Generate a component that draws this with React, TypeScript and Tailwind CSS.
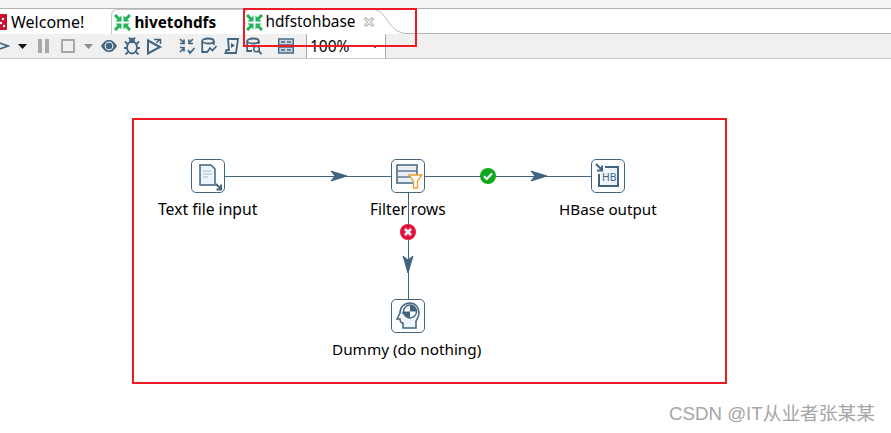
import type { ReactNode } from "react";

const blue = "#42647f";
const font = { fontFamily: '"Noto Sans", "Noto Sans CJK SC", sans-serif' };

function Merge({ color = "#1fb55a" }: { color?: string }) {
  return (
    <svg width="17" height="17" viewBox="0 0 17 17" className="shrink-0" fill={color} stroke="none">
      <path d="M1 1 5 5M16 1 12 5M1 16 5 12M16 16 12 12" stroke={color} strokeWidth="3" />
      <path d="M7.5 1.5V7.5H1.5Z" />
      <path d="M9.5 1.5V7.5H15.5Z" />
      <path d="M7.5 15.5V9.5H1.5Z" />
      <path d="M9.5 15.5V9.5H15.5Z" />
    </svg>
  );
}

function Tool({ children, w = 16, ml }: { children: ReactNode; w?: number; ml: string }) {
  return (
    <svg width={w} height="18" viewBox={`0 0 ${w} 18`} className={`shrink-0 ${ml}`} fill="none" stroke={blue} strokeWidth="1.8">
      {children}
    </svg>
  );
}

function Node({ left, top, label, labelLeft, size, children }: { left: number; top: number; label: string; labelLeft: number; size: string; children: ReactNode }) {
  return (
    <>
      <div className="absolute h-[34px] w-[34px] rounded-[5px] border border-[#42647f] bg-white" style={{ left, top }}>
        <svg width="32" height="32" viewBox="0 0 32 32" fill="none" stroke={blue} className="overflow-visible">
          {children}
        </svg>
      </div>
      <div className={`absolute leading-5 whitespace-nowrap text-black ${size}`} style={{ left: labelLeft, top: top + 40 }}>
        {label}
      </div>
    </>
  );
}

export default function App() {
  return (
    <div className="relative h-[433px] w-[891px] overflow-hidden bg-white" style={font}>
      <div className="h-[8px] bg-[#f4f4f4]" />
      <div className="relative flex h-[26px] items-center border-t border-[#b4b4b4] bg-white">
        <div className="flex items-center">
          <svg width="7" height="18" viewBox="0 0 7 18" className="shrink-0">
            <rect x="-4" y="1" width="11" height="16" rx="1" fill="#c8102e" />
            <circle cx="3" cy="6" r="1.2" fill="#fff" />
            <circle cx="1" cy="10" r="1.2" fill="#fff" />
            <circle cx="4" cy="13" r="1.2" fill="#fff" />
          </svg>
          <span className="ml-[4px] text-[16px] leading-5 text-black">Welcome!</span>
        </div>
        <div className="ml-[27px] flex h-[25px] w-[132px] items-center self-end rounded-tl-[6px] border-t border-l border-[#c8c8c8] pl-[2px]">
          <Merge />
          <span className="ml-[3px] text-[15.3px] leading-5 font-bold text-black">hivetohdfs</span>
        </div>
        <div className="flex h-[25px] w-[132px] items-center self-end rounded-tl-[6px] border-t border-l border-[#c8c8c8] bg-white pl-[2px]">
          <Merge />
          <span className="ml-[2px] text-[15.4px] leading-5 text-black">hdfstohbase</span>
          <svg width="12" height="12" viewBox="0 0 12 12" className="ml-[7px]" fill="#fff" stroke="#8a8a8a">
            <path d="M1.5 3 3 1.5 6 4.5 9 1.5 10.5 3 7.5 6 10.5 9 9 10.5 6 7.5 3 10.5 1.5 9 4.5 6 1.5 3Z" />
          </svg>
        </div>
        <svg width="36" height="25" viewBox="0 0 36 25" className="-ml-[2px] self-end" fill="none" stroke="#b4b4b4">
          <path d="M0 0.5C14 0.5 14 22 32 24.5H36" />
        </svg>
        <div className="h-[1px] flex-1 self-end bg-[#b4b4b4]" />
      </div>
      <div className="flex h-[25px] items-center border-b border-[#c8c8c8] bg-[#f0f0f0]">
        <svg width="10" height="18" viewBox="0 0 10 18" className="shrink-0" fill="none" stroke={blue} strokeWidth="1.8">
          <path d="M-6 4 8 9-6 14" />
        </svg>
        <svg width="9" height="5" viewBox="0 0 9 5" className="ml-[8px] shrink-0">
          <path d="M0 0H9L4.5 5Z" fill="#111" />
        </svg>
        <div className="ml-[11px] flex gap-[3px]">
          <div className="h-[14px] w-[4px] bg-[#a8a8a8]" />
          <div className="h-[14px] w-[4px] bg-[#a8a8a8]" />
        </div>
        <div className="ml-[12px] h-[14px] w-[14px] border-2 border-[#a8a8a8]" />
        <svg width="9" height="5" viewBox="0 0 9 5" className="ml-[9px] shrink-0">
          <path d="M0 0H9L4.5 5Z" fill="#8c8c8c" />
        </svg>
        <Tool ml="ml-[8px]">
          <path d="M0 9C3 4 5.5 3 8 3S13 4 16 9C13 14 10.5 15 8 15S3 14 0 9Z" fill={blue} stroke="none" />
          <circle cx="8" cy="9" r="4.4" fill="#e8eef3" stroke="none" />
          <circle cx="8" cy="9" r="3.2" fill={blue} stroke="none" />
        </Tool>
        <Tool ml="ml-[7px]">
          <ellipse cx="8" cy="10.5" rx="5" ry="6" fill="#e8eef3" />
          <circle cx="8" cy="3.5" r="2.8" fill={blue} stroke="none" />
          <path d="M3.5 7 1 4.5M12.5 7 15 4.5M3 11H0M13 11H16M4 15 1.5 17.5M12 15 14.5 17.5M5 0.5 6 2M11 0.5 10 2" />
        </Tool>
        <Tool ml="ml-[7px]">
          <path d="M1 3.5 13 10 1 16.5Z" strokeWidth="2" />
          <path d="M7 2.5H13.5V7M13.5 2.5C12 3 10 5 9.5 6" strokeWidth="1.5" />
        </Tool>
        <Tool ml="ml-[16px]">
          <path d="M1 2 5 6M5 2.5V6.5H1M14 2 10 6M10 2.5V6.5H14M1 15 5 11M5 14.5V10.5H1M9 13 11 16 15.5 11" strokeWidth="1.7" />
        </Tool>
        <Tool ml="ml-[6px]">
          <ellipse cx="7" cy="4" rx="5.8" ry="2.5" />
          <path d="M1.2 4V15H6M12.8 4V8" />
          <path d="M6 15.5 9 11 11.5 13.5 15.5 9" strokeWidth="1.7" />
        </Tool>
        <Tool ml="ml-[7px]" w={15}>
          <path d="M4 2H14L12 16H1.5L2.5 13H5Z" />
          <path d="M7 6 11 8.5 7 11Z" fill={blue} stroke="none" />
        </Tool>
        <Tool ml="ml-[7px]">
          <ellipse cx="7" cy="4" rx="5.8" ry="2.5" />
          <path d="M1.2 4V14H6M12.8 4V7" />
          <circle cx="10.5" cy="12" r="2.8" strokeWidth="1.5" />
          <path d="M12.5 14 15.5 17" />
        </Tool>
        <svg width="16" height="16" viewBox="0 0 16 16" className="ml-[16px] shrink-0" fill="#c8d4de" stroke={blue} strokeWidth="1.4">
          <rect x="0.7" y="1" width="14.6" height="6" />
          <rect x="0.7" y="9" width="14.6" height="6" />
          <path d="M3 4H7M9 4H13M3 12H7M9 12H13" />
        </svg>
        <div className="ml-[12px] flex h-[24px] w-[80px] items-center self-start border-x border-[#a8a8a8] bg-white pl-[3px] text-[15.5px] leading-5 text-black">
          100%
          <svg width="8" height="5" viewBox="0 0 8 5" className="ml-[22px]" fill="none" stroke="#666">
            <path d="M1 1 4 4 7 1" />
          </svg>
        </div>
      </div>

      {/* flow diagram */}
      <svg className="absolute top-0 left-0" width="891" height="433" fill="none" stroke={blue} strokeWidth="1">
        <path d="M225 176.5H391M425 176.5H591M408.5 193V299" />
        <path d="M331 171 347 176 331 181 335 176Z" fill={blue} />
        <path d="M531 171 547 176 531 181 535 176Z" fill={blue} />
        <path d="M403 256 408 273 413 256 408 260Z" fill={blue} />
      </svg>

      <Node left={191} top={159} label="Text file input" labelLeft={158} size="text-[15.7px]">
        <path d="M8 5H19L23 9V25H8Z" fill="#edf5fb" strokeWidth="1.5" />
        <path d="M11 11H19M11 14H20M11 17H16" stroke="#a9bccb" />
        <path d="M24 24 29 29M29 24.5V29.5H24.5" strokeWidth="2" />
      </Node>
      <Node left={391} top={159} label="Filter rows" labelLeft={370} size="text-[15.5px]">
        <rect x="5" y="5" width="20" height="18" fill="#e9eff4" stroke="#5f7d96" strokeWidth="1.8" />
        <path d="M5 11H25M5 17H25" stroke="#5f7d96" strokeWidth="1.6" />
        <path d="M17 15H30L25.5 21V28H21.5V21Z" fill="#fff" stroke="#f0a030" strokeWidth="1.3" />
      </Node>
      <Node left={591} top={159} label="HBase output" labelLeft={559} size="text-[15.2px]">
        <rect x="9" y="9" width="16" height="16" fill="#edf5fb" stroke="none" />
        <path d="M13 7H26V26H7V14" strokeWidth="2" />
        <path d="M4 4 10 10M10 5.5V10.5H5" strokeWidth="2" />
        <text x="10" y="21" fontSize="10.5" fill={blue} stroke="none">HB</text>
      </Node>
      <Node left={391} top={299} label="Dummy (do nothing)" labelLeft={332} size="text-[15.3px]">
        <path d="M11 28V23C8 23 8 21 8 19H5L8 13C8 7 12 3 18 3 24 3 27 8 27 13 27 17 25 19 24 21V28Z" fill="#edf5fb" strokeWidth="1.5" />
        <circle cx="18" cy="11.5" r="6.5" fill="#fff" strokeWidth="1.4" />
        <path d="M18 5A6.5 6.5 0 0 1 24.5 11.5H18ZM18 11.5V18A6.5 6.5 0 0 1 11.5 11.5Z" fill={blue} stroke="none" />
        <circle cx="11" cy="13" r="1" fill={blue} stroke="none" />
      </Node>

      <svg className="absolute top-[168px] left-[480px]" width="16" height="16" viewBox="0 0 16 16">
        <circle cx="8" cy="8" r="8" fill="#0fa81a" />
        <path d="M4 8.2 6.8 11 12 5.5" fill="none" stroke="#fff" strokeWidth="2.2" />
      </svg>
      <svg className="absolute top-[224px] left-[400px]" width="16" height="16" viewBox="0 0 16 16">
        <circle cx="8" cy="8" r="8" fill="#e2133c" />
        <path d="M5 5 11 11M11 5 5 11" fill="none" stroke="#fff" strokeWidth="2.6" />
      </svg>

      {/* red annotation frames */}
      <div className="absolute top-[8px] left-[243px] h-[39px] w-[174px] border-2 border-[#ed1c24]" />
      <div className="absolute top-[118px] left-[132px] h-[266px] w-[595px] border-2 border-[#ed1c24]" />

      <div className="absolute top-[402px] left-[669px] text-[18.7px] leading-6 whitespace-nowrap text-[#a6a6a6]" style={{ fontFamily: '"Liberation Sans", "Noto Sans CJK SC", sans-serif' }}>
        CSDN @IT从业者张某某
      </div>
    </div>
  );
}
